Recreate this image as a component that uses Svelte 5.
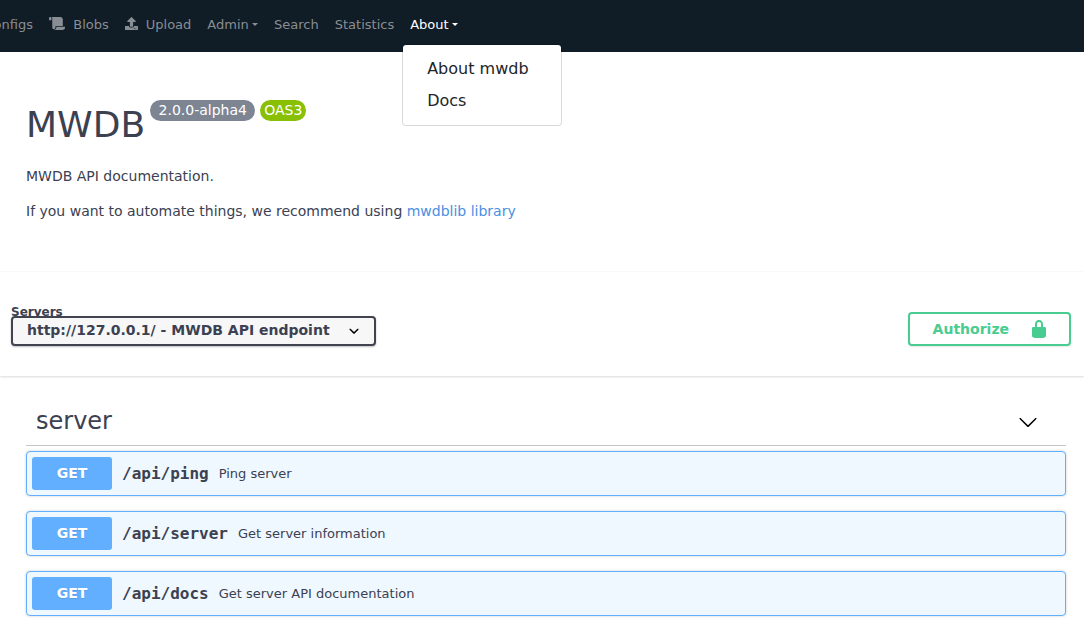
<script>
  const operations = [
    { path: '/api/ping', summary: 'Ping server' },
    { path: '/api/server', summary: 'Get server information' },
    { path: '/api/docs', summary: 'Get server API documentation' }
  ];
</script>

<nav class="navbar">
  <span class="link first">Configs</span>
  <span class="link">
    <svg class="ico scroll" viewBox="0 0 640 512"><path fill="currentColor" d="M48 0C21.53 0 0 21.53 0 48v64c0 8.84 7.16 16 16 16h80V48C96 21.53 74.47 0 48 0zm208 412.57V352h288V96c0-52.94-43.06-96-96-96H111.59C121.74 13.41 128 29.92 128 48v368c0 38.87 34.65 69.65 74.75 63.12C234.22 474 256 444.46 256 412.57zM288 384v32c0 52.93-43.06 96-96 96h336c61.86 0 112-50.14 112-112 0-8.84-7.16-16-16-16H288z" /></svg>Blobs
  </span>
  <span class="link">
    <svg class="ico upload" viewBox="0 0 512 512"><path fill="currentColor" d="M296 384h-80c-13.3 0-24-10.7-24-24V192h-87.700c-17.8 0-26.7-21.5-14.1-34.1L242.300 5.700c7.500-7.500 19.800-7.500 27.300 0l152.200 152.200c12.600 12.600 3.700 34.100-14.100 34.100H320v168c0 13.300-10.700 24-24 24zm216-8v112c0 13.300-10.700 24-24 24H24c-13.300 0-24-10.700-24-24V376c0-13.300 10.700-24 24-24h136v8c0 30.900 25.100 56 56 56h80c30.900 0 56-25.100 56-56v-8h136c13.300 0 24 10.700 24 24zm-124 88c0-11-9-20-20-20s-20 9-20 20 9 20 20 20 20-9 20-20zm64 0c0-11-9-20-20-20s-20 9-20 20 9 20 20 20 20-9 20-20z" /></svg>Upload
  </span>
  <span class="link">Admin<i class="caret"></i></span>
  <span class="link">Search</span>
  <span class="link">Statistics</span>
  <span class="link active">About<i class="caret"></i>
    <span class="menu">
      <span>About mwdb</span>
      <span>Docs</span>
    </span>
  </span>
</nav>

<main>
  <section class="info">
    <header>
      <h1>MWDB</h1>
      <span class="badge version">2.0.0-alpha4</span>
      <span class="badge oas">OAS3</span>
    </header>
    <p>MWDB API documentation.</p>
    <p>If you want to automate things, we recommend using <a href="#mwdblib">mwdblib library</a></p>
  </section>

  <section class="schemes">
    <div class="servers">
      <span class="label">Servers</span>
      <div class="select">
        <span>http://127.0.0.1/ - MWDB API endpoint</span>
        <svg width="20" height="20" viewBox="0 0 20 20"><path d="M13.418 7.859c.271-.268.709-.268.978 0 .27.268.272.701 0 .969l-3.908 3.83c-.27.268-.707.268-.979 0l-3.908-3.83c-.27-.267-.27-.701 0-.969.271-.268.709-.268.978 0L10 11l3.418-3.141z" /></svg>
      </div>
    </div>
    <button class="authorize">
      <span>Authorize</span>
      <svg width="20" height="20" viewBox="0 0 20 20"><path fill="#49cc90" d="M15.8 8H14V5.6C14 2.703 12.665 1 10 1 7.334 1 6 2.703 6 5.6V8H4c-.553 0-1 .646-1 1.199V17c0 .549.428 1.139.951 1.307l1.197.387C5.672 18.861 6.55 19 7.1 19h5.8c.549 0 1.428-.139 1.951-.307l1.196-.387c.524-.167.953-.757.953-1.306V9.199C17 8.646 16.352 8 15.8 8zM12 8H8V5.199C8 3.754 8.797 3 10 3c1.203 0 2 .754 2 2.199V8z" /></svg>
    </button>
  </section>

  <section class="tag">
    <div class="tag-head">
      <h2>server</h2>
      <svg width="20" height="20" viewBox="0 0 20 20"><path d="M17.418 6.109c.272-.268.709-.268.979 0s.271.701 0 .969l-7.908 7.83c-.27.268-.707.268-.979 0l-7.908-7.83c-.27-.268-.27-.701 0-.969.271-.268.709-.268.979 0L10 13.25l7.418-7.141z" /></svg>
    </div>
    {#each operations as op}
      <div class="op">
        <span class="method">GET</span>
        <span class="path">{op.path}</span>
        <span class="summary">{op.summary}</span>
      </div>
    {/each}
  </section>
</main>

<style>
  :global(body) {
    background: #fff;
    overflow: hidden;
    font-family: "DejaVu Sans", sans-serif;
    color: #3b4151;
  }
  * { box-sizing: border-box; }
  svg { display: block; flex: none; }

  .navbar {
    display: flex;
    align-items: center;
    height: 52px;
    padding-bottom: 3px;
    background: #101c26;
    font-size: 13px;
  }
  .link {
    position: relative;
    display: flex;
    align-items: center;
    padding: 0 8px;
    color: #888e93;
    white-space: nowrap;
  }
  .first { width: 41px; justify-content: flex-end; }
  .active { color: #fff; }
  .ico { height: 13px; margin: 0 8px 2px 0; }
  .scroll { width: 16.25px; }
  .upload { width: 13px; }
  .caret {
    margin: 0 0 1px 3.3px;
    border-top: 3.9px solid;
    border-left: 3.9px solid transparent;
    border-right: 3.9px solid transparent;
  }
  .menu {
    position: absolute;
    z-index: 2;
    top: 27px;
    left: 0;
    width: 160px;
    height: 82px;
    padding: 8px 0;
    display: flex;
    flex-direction: column;
    background: #fff;
    background-clip: padding-box;
    border: 1px solid rgba(0, 0, 0, 0.15);
    border-radius: 4px;
    color: #212529;
    font-size: 16px;
    line-height: 24px;
  }
  .menu span { padding: 4px 24px; }

  .info { height: 220px; padding: 46px 26px 0; font-size: 14px; }
  .info header { display: flex; align-items: flex-start; height: 52px; }
  h1 { margin: 6px 5px 0 0; font-size: 36px; font-weight: 400; line-height: 42px; }
  .badge {
    height: 21px;
    margin: 2px 5px 0 0;
    border-radius: 57px;
    color: #fff;
    line-height: 21px;
  }
  .version { padding: 0 8px 0 8.5px; background: #7d8492; }
  .oas { padding: 0 3.8px 0 4.3px; background: #89bf04; }
  .info p { margin: 18px 0; line-height: 17px; }
  a { color: #4990e2; text-decoration: none; }

  .schemes {
    display: flex;
    justify-content: space-between;
    height: 104px;
    padding: 33px 13px 0 11px;
    box-shadow: 0 1px 2px rgba(0, 0, 0, 0.15), 0 -1px 0 rgba(0, 0, 0, 0.015);
  }
  .label {
    display: block;
    height: 11px;
    font-size: 12px;
    font-weight: 700;
    line-height: 14px;
  }
  .select {
    position: relative;
    display: flex;
    justify-content: space-between;
    align-items: center;
    width: 365px;
    height: 30px;
    padding: 0 10px 0 14px;
    background: #f7f7f7;
    border: 2px solid #41444e;
    border-radius: 4px;
    box-shadow: 0 1px 2px rgba(0, 0, 0, 0.25);
    font-size: 14px;
    font-weight: 700;
    line-height: 16px;
  }
  .select span { padding-bottom: 2px; }
  .authorize {
    display: flex;
    align-items: center;
    justify-content: space-between;
    width: 163px;
    height: 34px;
    margin-top: 7px;
    padding: 0 20px 0 22.6px;
    background: transparent;
    border: 2px solid #49cc90;
    border-radius: 4px;
    box-shadow: 0 1px 2px rgba(0, 0, 0, 0.1);
    color: #49cc90;
    font: 700 14px "DejaVu Sans", sans-serif;
  }

  .tag { padding: 20px 18px 0 26px; }
  .tag-head {
    display: flex;
    justify-content: space-between;
    align-items: center;
    height: 50px;
    margin-bottom: 5px;
    padding: 0 28px 0 10px;
    border-bottom: 1px solid rgba(59, 65, 81, 0.3);
  }
  .tag-head svg { margin-top: 3px; }
  h2 { margin: 0; font-size: 24px; font-weight: 400; line-height: 28px; }
  .op {
    display: flex;
    align-items: center;
    height: 45px;
    margin-bottom: 15px;
    padding: 5px;
    background: #eff7ff;
    border: 1px solid #61affe;
    border-radius: 4px;
    box-shadow: 0 0 3px rgba(0, 0, 0, 0.19);
  }
  .method {
    width: 80px;
    height: 33px;
    border-radius: 3px;
    background: #61affe;
    color: #fff;
    font-size: 14px;
    font-weight: 700;
    line-height: 33px;
    text-align: center;
    text-shadow: 0 1px 0 rgba(0, 0, 0, 0.1);
  }
  .path {
    padding: 0 10px;
    font: 700 16px "DejaVu Sans Mono", monospace;
  }
  .summary { font-size: 13px; }
</style>
